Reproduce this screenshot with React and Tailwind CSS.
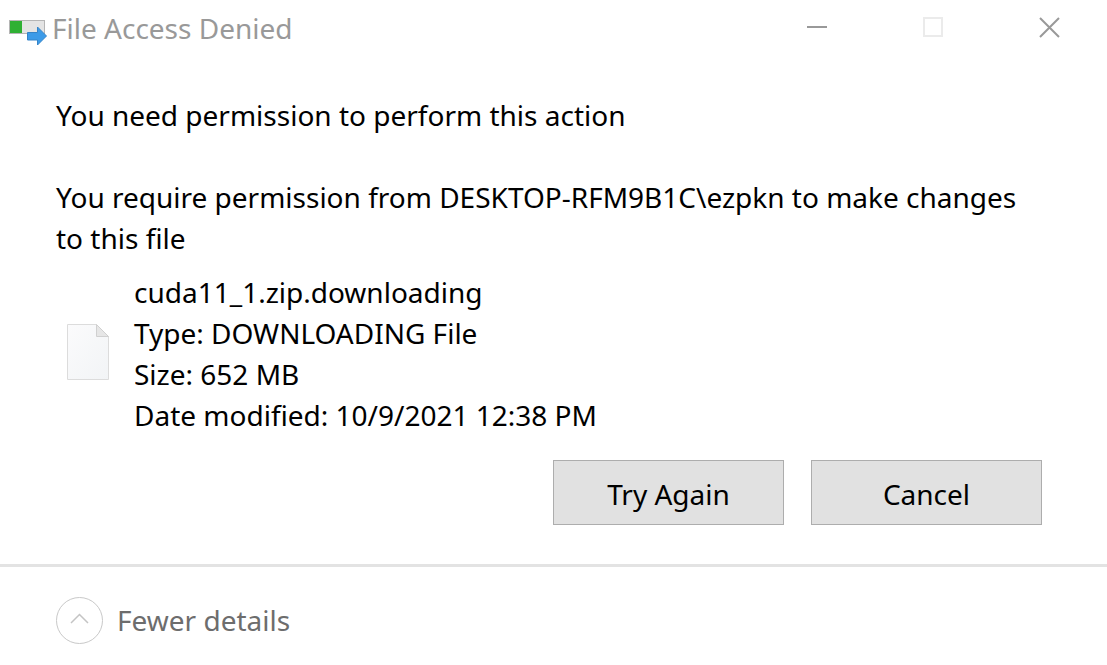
import React from "react";

const details = ["cuda11_1.zip.downloading", "Type: DOWNLOADING File", "Size: 652 MB", "Date modified: 10/9/2021 12:38 PM"];

function TransferIcon() {
  return (
    <svg width="40" height="38" viewBox="0 0 40 38" aria-hidden="true">
      <rect x="1.5" y="11.5" width="35" height="13" fill="#e4e4e4" stroke="#b5b5b5" />
      <rect x="2" y="12" width="12" height="12" fill="#2fb034" />
      <path d="M19.500 23.500h10v-5.500l9 9-9 9v-5h-10z" fill="#3c9be8" stroke="#3484c9" />
    </svg>
  );
}

function FileIcon() {
  return (
    <svg width="44" height="60" viewBox="0 0 44 60" aria-hidden="true">
      <defs>
        <linearGradient id="paper" x1="0" y1="0" x2="1" y2="1">
          <stop offset="0" stopColor="#fbfbfc" />
          <stop offset="1" stopColor="#f2f4f6" />
        </linearGradient>
      </defs>
      <path d="M1.500 .5h29l12 12v43h-41z" fill="url(#paper)" stroke="#dcdcdc" />
      <path d="M30.500 .5v12h12z" fill="#e6e6e6" stroke="#d0d0d0" />
    </svg>
  );
}

export default function App() {
  return (
    <div className="flex min-h-screen flex-col bg-white font-['Noto_Sans',sans-serif] text-[28px] leading-[41px] text-black">
      <header className="flex h-14 items-center pl-2 text-[#999999]">
        <TransferIcon />
        <h1 className="ml-1">File Access Denied</h1>
        <div className="ml-auto flex self-start">
          <button aria-label="Minimize" className="flex h-[54px] w-[116px] items-center justify-center">
            <svg width="22" height="22"><path d="M1 11h20" stroke="#999" strokeWidth="2" /></svg>
          </button>
          <button aria-label="Maximize" className="flex h-[54px] w-[116px] items-center justify-center" disabled>
            <svg width="22" height="22"><rect x="2" y="2" width="18" height="18" fill="none" stroke="#ebebeb" strokeWidth="2" /></svg>
          </button>
          <button aria-label="Close" className="flex h-[54px] w-[116px] items-center justify-center">
            <svg width="22" height="22"><path d="M2 2l19 19M21 2L2 21" stroke="#999" strokeWidth="2" /></svg>
          </button>
        </div>
      </header>

      <main className="pt-[39px] pr-[65px] pb-[39px] pl-14">
        <p>You need permission to perform this action</p>
        <p className="mt-[41px]">You require permission from DESKTOP-RFM9B1C\ezpkn to make changes to this file</p>
        <div className="mt-[13px] flex items-center gap-6 pl-[10px]">
          <FileIcon />
          <ul>
            {details.map((line) => (
              <li key={line}>{line}</li>
            ))}
          </ul>
        </div>
        <div className="mt-6 flex justify-end gap-[27px]">
          <button className="h-[65px] w-[231px] border border-[#adadad] bg-[#e1e1e1] pt-1">Try Again</button>
          <button className="h-[65px] w-[231px] border border-[#adadad] bg-[#e1e1e1] pt-1">Cancel</button>
        </div>
      </main>

      <footer className="border-t-[3px] border-[#e3e3e3] px-14 pt-[30px]">
        <button className="flex items-center gap-[14px] text-[#6d6d6d]">
          <svg width="47" height="47" fill="none" aria-hidden="true">
            <circle cx="23.500" cy="23.500" r="23" stroke="#c8c8c8" />
            <path d="M15 26l8.500-8.500 8.500 8.500" stroke="#c4c4c4" strokeWidth="1.500" />
          </svg>
          Fewer details
        </button>
      </footer>
    </div>
  );
}
